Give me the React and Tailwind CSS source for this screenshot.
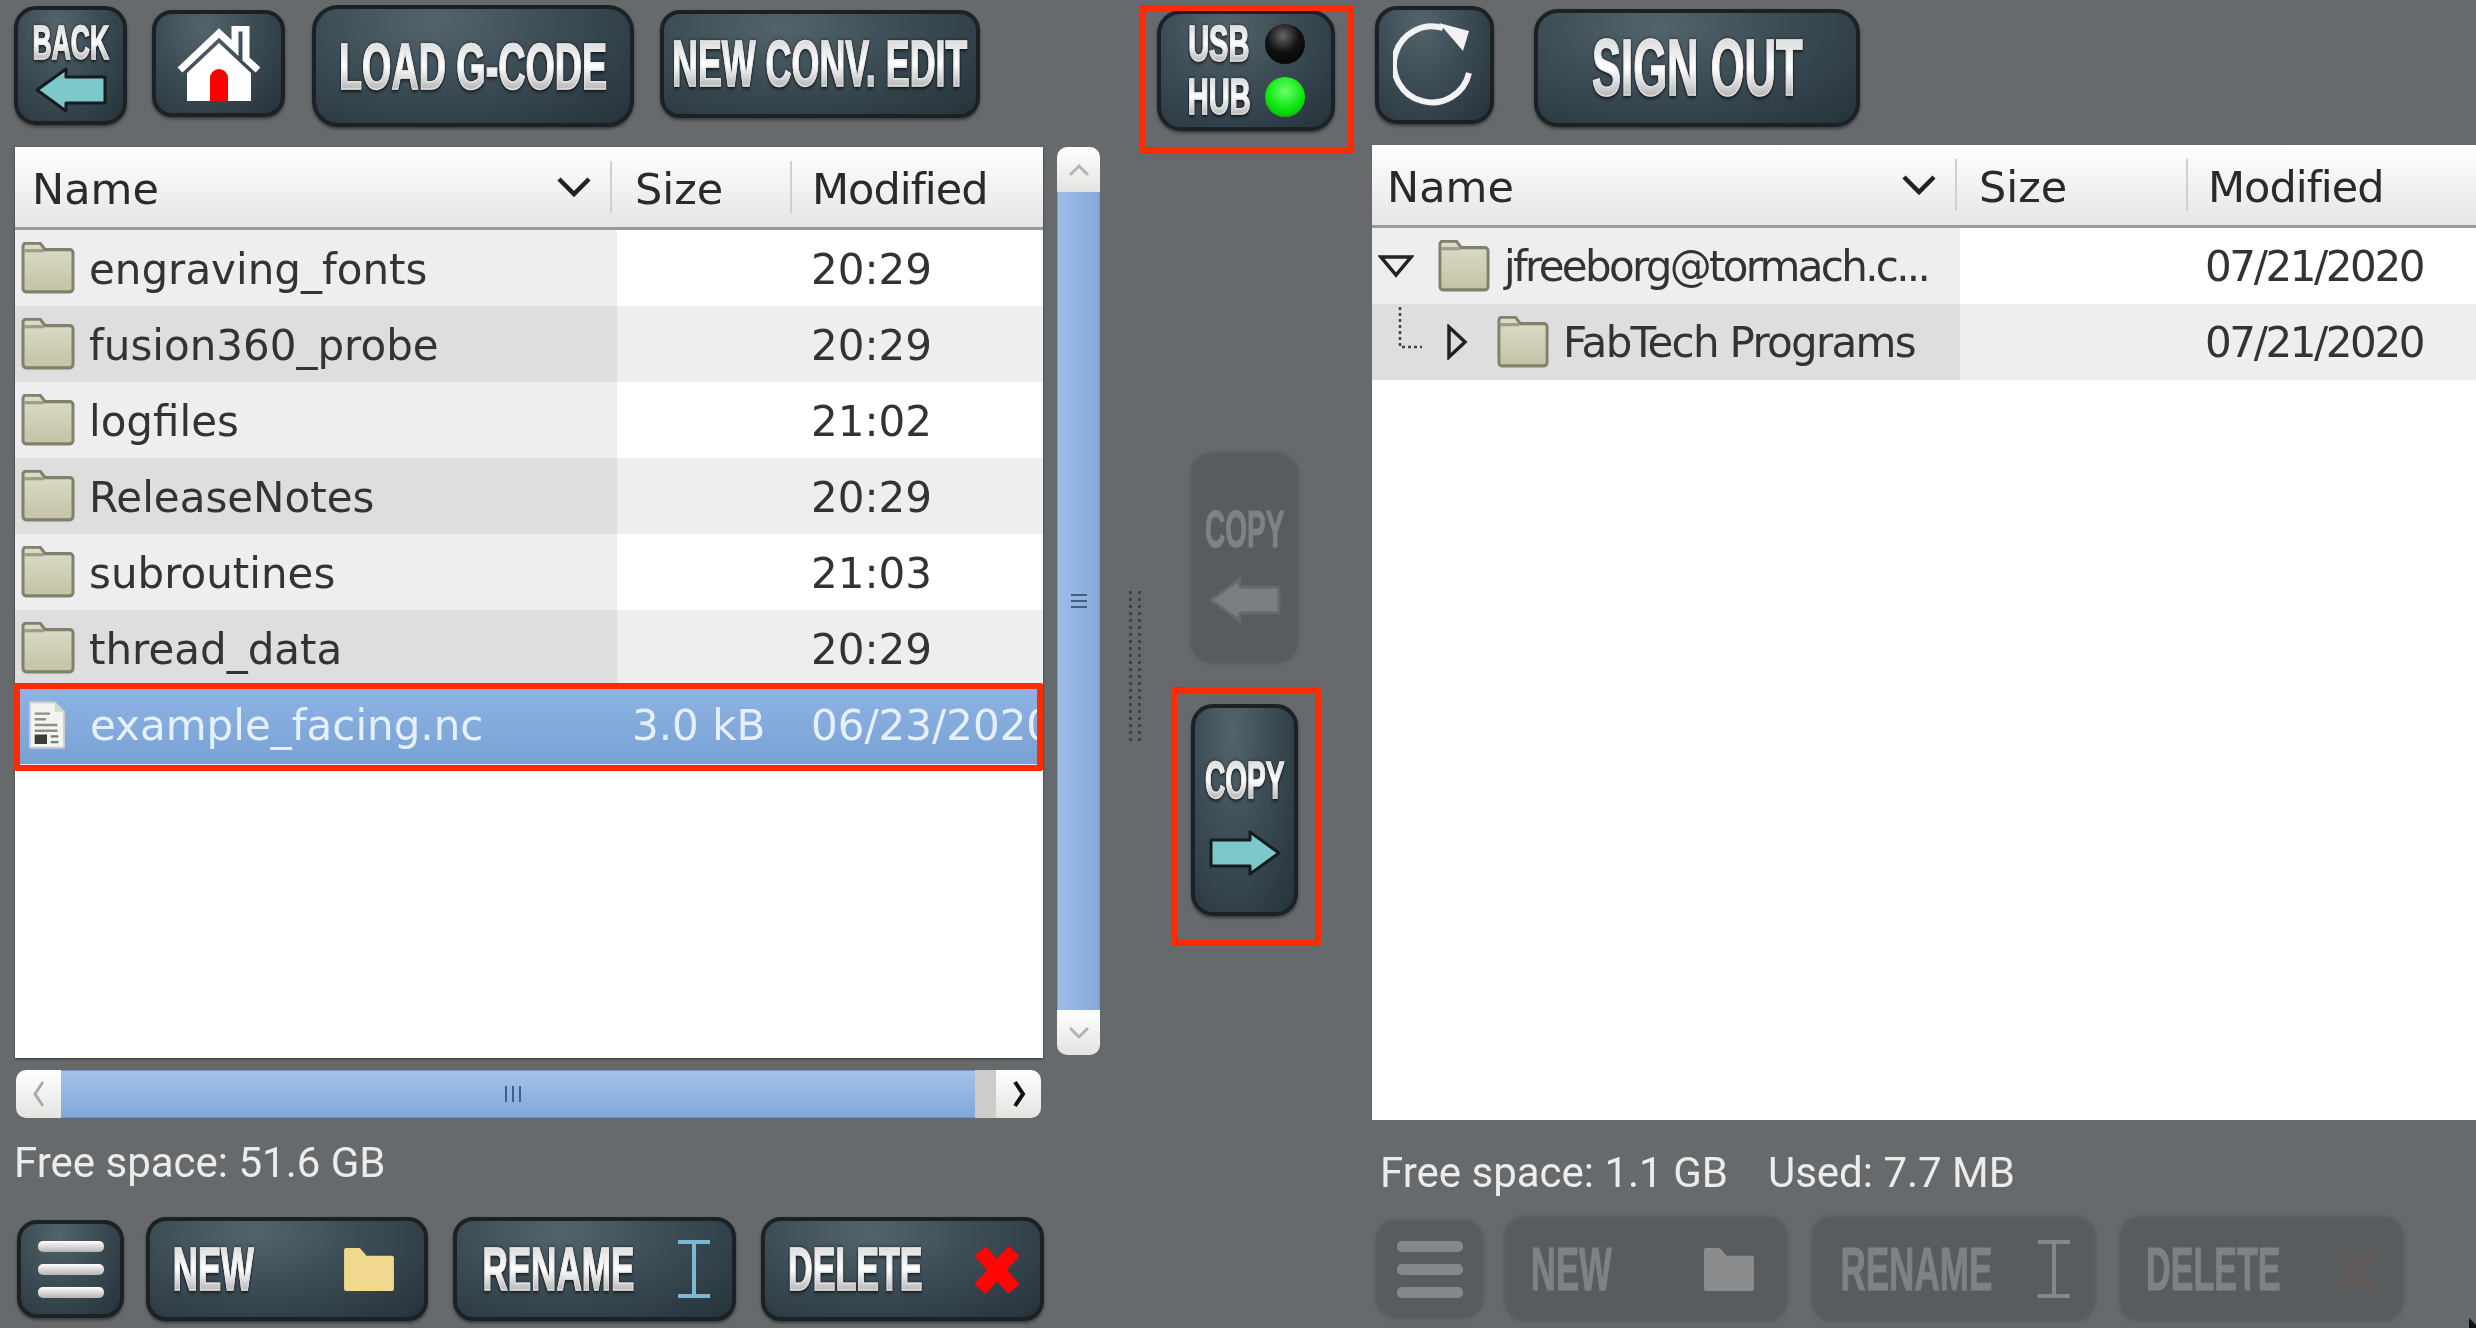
import React from "react";

const sans = "font-['DejaVu_Sans','Liberation_Sans',sans-serif]";
const BTN = "shrink-0 flex items-center rounded-[20px] border-[4px] border-[#1c2125] bg-[radial-gradient(ellipse_at_38%_12%,#54646d_0%,#3c4c55_45%,#2b3a42_85%,#263238_100%)] shadow-[0_2px_3px_rgba(30,30,30,.6)]";
const OFF = "shrink-0 flex items-center rounded-[20px] border-[3px] border-[#5a5d60] bg-[#595c5f] shadow-[0_0_4px_rgba(70,70,70,.5)]";

function Label({ text, box, scale, size, off }) {
  return (
    <span className={`flex justify-center shrink-0 ${box}`}>
      <span
        className={`shrink-0 inline-block whitespace-nowrap font-['Liberation_Sans',sans-serif] font-bold leading-none ${size} ${scale} ${
          off
            ? "text-[#7f8285] [-webkit-text-stroke:1px_#7f8285]"
            : "bg-gradient-to-b from-[#cfcfcf] via-white to-[#9a9a9a] bg-clip-text text-transparent [-webkit-text-stroke:1.5px_rgba(232,232,232,.75)] drop-shadow-[0_1px_2px_rgba(0,0,0,.9)]"
        }`}
      >
        {text}
      </span>
    </span>
  );
}

function Folder({ className }) {
  return (
    <svg viewBox="0 0 54 48" preserveAspectRatio="none" className={className}>
      <defs>
        <linearGradient id="fg" x1="0" y1="0" x2="0" y2="1">
          <stop offset="0" stopColor="#dcdcca" />
          <stop offset="1" stopColor="#c4c3a6" />
        </linearGradient>
      </defs>
      <path d="M2 4 a3 3 0 0 1 3-3 h14 l5 6 h25 a3 3 0 0 1 3 3 v33 a3 3 0 0 1-3 3 H5 a3 3 0 0 1-3-3z" fill="url(#fg)" stroke="#80806b" strokeWidth="3" />
      <path d="M3 8 h20" stroke="#9d9d88" strokeWidth="3" fill="none" />
    </svg>
  );
}

function FileIcon() {
  return (
    <svg viewBox="0 0 40 50" className="w-[38px] h-[48px] shrink-0 ml-[13px] mr-[24px]">
      <path d="M2 1 h26 l10 10 v38 H2z" fill="#f4f4ee" stroke="#c8ccd2" strokeWidth="2" />
      <path d="M28 1 v10 h10" fill="#d8d8d0" />
      <path d="M7 13 h16 M7 19 h12 M7 25 h24 M7 31 h24" stroke="#8d8d85" strokeWidth="2.5" />
      <rect x="7" y="35" width="13" height="10" fill="#3d3d38" />
      <path d="M24 37 h8 M24 43 h8" stroke="#77776f" strokeWidth="2.5" />
    </svg>
  );
}

function MenuIcon({ off }) {
  const bar = off
    ? "w-[66px] h-[11px] rounded-[5px] bg-[#85888a]"
    : "w-[66px] h-[11px] rounded-[5px] bg-gradient-to-b from-white to-[#b5b5b5]";
  return (
    <span className="flex flex-col gap-[12px]">
      <span className={bar} />
      <span className={bar} />
      <span className={bar} />
    </span>
  );
}

function NewFolderIcon({ off }) {
  return (
    <svg viewBox="0 0 52 44" className="w-[51px] h-[43px] shrink-0">
      <path d="M1 2 a2 2 0 0 1 2-2 h14 l7 8 h26 a2 2 0 0 1 2 2 v32 a2 2 0 0 1-2 2 H3 a2 2 0 0 1-2-2z" fill={off ? "#8a8c8e" : "#f0d98e"} />
    </svg>
  );
}

function BeamIcon({ off }) {
  const c = off ? "#85888a" : "#7fb6d2";
  return (
    <svg viewBox="0 0 34 58" className="w-[34px] h-[58px] shrink-0">
      <path d="M1 2 h32 M17 2 v54 M1 56 h32" stroke={c} strokeWidth="4" fill="none" />
    </svg>
  );
}

function XIcon({ off }) {
  return (
    <svg viewBox="0 0 46 48" className="w-[46px] h-[48px] shrink-0">
      <path d="M6 6 L40 44 M40 6 L6 44" stroke={off ? "#615c5c" : "#ff0505"} strokeWidth="15" strokeLinecap="butt" fill="none" />
    </svg>
  );
}

function Arrow({ dir, off }) {
  const fill = off ? "#7b7e80" : "#7cc9cb";
  const stroke = off ? "#66696b" : "#161b1e";
  return (
    <svg viewBox="0 0 74 46" className="w-[74px] h-[46px]">
      <path
        d={dir === "left" ? "M3 23 L32 2 V10 H71 V36 H32 V44z" : "M71 23 L42 2 V10 H3 V36 H42 V44z"}
        fill={fill}
        stroke={stroke}
        strokeWidth="3"
        strokeLinejoin="round"
      />
    </svg>
  );
}

function BottomBar({ off, className }) {
  const b = off ? OFF : BTN;
  return (
    <div className={`flex items-start ${className}`}>
      <div className={`${b} justify-center w-[107px] h-[98px] mt-[3px]`}>
        <MenuIcon off={off} />
      </div>
      <div className={`${b} justify-between w-[282px] h-[104px] ml-[22px] pl-[23px] pr-[30px]`}>
        <Label text="NEW" box="w-[81px]" scale="scale-x-[.56]" size="text-[62px]" off={off} />
        <NewFolderIcon off={off} />
      </div>
      <div className={`${b} justify-between w-[283px] h-[104px] ml-[25px] pl-[25px] pr-[21px]`}>
        <Label text="RENAME" box="w-[152px]" scale="scale-x-[.565]" size="text-[62px]" off={off} />
        <BeamIcon off={off} />
      </div>
      <div className={`${b} justify-between w-[283px] h-[104px] ml-[25px] pl-[23px] pr-[20px]`}>
        <Label text="DELETE" box="w-[134px]" scale="scale-x-[.55]" size="text-[62px]" off={off} />
        <XIcon off={off} />
      </div>
    </div>
  );
}

function Chevron() {
  return (
    <svg viewBox="0 0 36 22" className="w-[36px] h-[22px]">
      <path d="M3 3 L18 18 L33 3" stroke="#222" strokeWidth="4.5" fill="none" />
    </svg>
  );
}

function Header({ cols, h, namePad, sizePad }) {
  return (
    <div className={`flex shrink-0 ${h} items-center bg-gradient-to-b from-white to-[#e6e5e3] border-b-[3px] border-[#9b9b99] text-[43px] text-[#2a2a2a] ${sans}`}>
      <div className={`${cols[0]} flex items-center justify-between h-[52px] border-r-2 border-[#cfcfcd]`}>
        <span className={`${namePad} pt-[4px]`}>Name</span>
        <span className="pr-[18px]">
          <Chevron />
        </span>
      </div>
      <div className={`${cols[1]} flex items-center h-[52px] ${sizePad} pt-[4px] border-r-2 border-[#cfcfcd]`}>Size</div>
      <div className={`${cols[2]} flex items-center h-[52px] pl-[20px] pt-[4px] tracking-[-1px]`}>Modified</div>
    </div>
  );
}

const leftRows = [
  ["engraving_fonts", "20:29"],
  ["fusion360_probe", "20:29"],
  ["logfiles", "21:02"],
  ["ReleaseNotes", "20:29"],
  ["subroutines", "21:03"],
  ["thread_data", "20:29"],
];

function ScrollBtn({ className, children }) {
  return (
    <div className={`bg-gradient-to-b from-white to-[#e4e3e0] flex items-center justify-center shrink-0 ${className}`}>
      {children}
    </div>
  );
}

function LeftColumn() {
  return (
    <div className="w-[1110px] shrink-0 flex flex-col">
      <div className="h-[147px] flex items-start shrink-0 pl-[14px]">
        <div className={`${BTN} justify-center w-[113px] h-[119px] mt-[6px] flex-col rounded-[22px]`}>
          <Label text="BACK" box="w-[76px]" scale="scale-x-[.54]" size="text-[49px]" />
          <Arrow dir="left" />
        </div>
        <div className={`${BTN} justify-center w-[133px] h-[107px] mt-[10px] ml-[25px]`}>
          <svg viewBox="0 0 84 76" className="w-[84px] h-[76px]">
            <path d="M3 44 L42 7 L58 22 V2 H69 V33 L81 44" fill="none" stroke="#fff" strokeWidth="7" />
            <path d="M10 47 L42 17 L74 47 V75 H10z" fill="#fff" />
            <path d="M33 75 V52 a9 9 0 0 1 18 0 V75z" fill="#f00" />
          </svg>
        </div>
        <div className={`${BTN} justify-center w-[322px] h-[122px] mt-[5px] ml-[27px] rounded-[26px]`}>
          <Label text="LOAD G-CODE" box="w-[267px]" scale="scale-x-[.58]" size="text-[65px]" />
        </div>
        <div className={`${BTN} justify-center w-[320px] h-[108px] mt-[10px] ml-[26px]`}>
          <Label text="NEW CONV. EDIT" box="w-[298px]" scale="scale-x-[.56]" size="text-[64px]" />
        </div>
      </div>

      <div className="flex items-start ml-[15px] h-[911px] shrink-0">
        <div className="w-[1028px] h-[911px] bg-white flex flex-col shrink-0 shadow-[0_1px_2px_#333]">
          <Header cols={["w-[597px]", "w-[180px]", "flex-1"]} h="h-[83px]" namePad="pl-[17px]" sizePad="pl-[23px]" />
          {leftRows.map(([n, m], i) => (
            <div key={n} className={`flex h-[76px] shrink-0 items-center text-[#333] text-[42px] ${sans} ${i % 2 ? "bg-[#eeeeee]" : "bg-white"}`}>
              <div className={`w-[602px] h-full flex items-center ${i % 2 ? "bg-[#dedede]" : "bg-[#eeeef0]"}`}>
                <Folder className="w-[54px] h-[52px] ml-[6px] mr-[14px] shrink-0" />
                <span className="pt-[2px]">{n}</span>
              </div>
              <div className="w-[194px]" />
              <div className="pt-[2px]">{m}</div>
            </div>
          ))}
          <div className={`relative flex h-[80px] shrink-0 items-center text-[#e6f0fb] text-[42px] ${sans} bg-gradient-to-b from-[#8eb4e5] to-[#79a1d3] border-b-2 border-[#dce8f6]`}>
            <div className="w-[617px] flex items-center">
              <FileIcon />
              <span>example_facing.nc</span>
            </div>
            <div className="w-[179px]">3.0 kB</div>
            <div className="w-[227px] overflow-hidden whitespace-nowrap">06/23/2020</div>
            <div className="absolute -left-[1px] right-0 -top-[3px] bottom-[-7px] border-[6px] border-[#ff2a00] rounded-[2px]" />
          </div>
        </div>

        <div className="w-[43px] h-[908px] ml-[14px] flex flex-col shrink-0">
          <ScrollBtn className="h-[45px] rounded-t-[10px]">
            <svg viewBox="0 0 24 14" className="w-[24px] h-[14px]"><path d="M3 12 L12 3 L21 12" stroke="#b4b4b2" strokeWidth="3" fill="none" /></svg>
          </ScrollBtn>
          <div className="flex-1 bg-gradient-to-r from-[#9dbde8] to-[#86aad9] border-x border-[#7a9ecc] flex items-center justify-center">
            <span className="flex flex-col gap-[4px]">
              <span className="w-[16px] h-[2px] bg-[#3f5f86]" />
              <span className="w-[16px] h-[2px] bg-[#3f5f86]" />
              <span className="w-[16px] h-[2px] bg-[#3f5f86]" />
            </span>
          </div>
          <ScrollBtn className="h-[45px] rounded-b-[10px]">
            <svg viewBox="0 0 24 14" className="w-[24px] h-[14px]"><path d="M3 2 L12 11 L21 2" stroke="#b4b4b2" strokeWidth="3" fill="none" /></svg>
          </ScrollBtn>
        </div>
      </div>

      <div className="flex h-[48px] ml-[16px] w-[1025px] mt-[12px] shrink-0">
        <ScrollBtn className="w-[45px] rounded-l-[10px]">
          <svg viewBox="0 0 14 30" className="w-[14px] h-[30px]"><path d="M11 3 L3 15 L11 27" stroke="#aaa" strokeWidth="3" fill="none" /></svg>
        </ScrollBtn>
        <div className="w-[914px] bg-gradient-to-b from-[#a3c2ea] to-[#82a8d8] border-y border-[#6f95c4] flex items-center justify-center gap-[5px] pr-[10px]">
          <span className="w-[2px] h-[16px] bg-[#3f5f86]" />
          <span className="w-[2px] h-[16px] bg-[#3f5f86]" />
          <span className="w-[2px] h-[16px] bg-[#3f5f86]" />
        </div>
        <div className="w-[21px] bg-[#cccccb]" />
        <ScrollBtn className="w-[45px] rounded-r-[10px]">
          <svg viewBox="0 0 14 30" className="w-[14px] h-[30px]"><path d="M3 3 L11 15 L3 27" stroke="#111" strokeWidth="4" fill="none" /></svg>
        </ScrollBtn>
      </div>

      <div className="mt-[22px] ml-[14px] h-[45px] flex items-center text-[42px] text-[#ececec] font-['Roboto',sans-serif] whitespace-nowrap shrink-0">
        Free space: 51.6 GB
      </div>

      <BottomBar className="mt-[32px] ml-[17px]" />
    </div>
  );
}

function CenterColumn() {
  return (
    <div className="w-[262px] shrink-0 flex flex-col">
      <div className="relative ml-[47px] mt-[10px] w-[178px] h-[121px] shrink-0">
        <div className={`${BTN} justify-center w-full h-full flex-col gap-[3px] rounded-[24px]`}>
          {[["USB", "bg-[radial-gradient(circle_at_45%_30%,#666_0%,#111_45%,#000_100%)]"], ["HUB", "bg-[radial-gradient(circle_at_50%_35%,#6bff6b_0%,#0ee60e_55%,#0a9a0a_100%)]"]].map(([t, c]) => (
            <div key={t} className="flex items-center gap-[14px]">
              <Label text={t} box="w-[64px]" scale="scale-x-[.58]" size="text-[50px]" />
              <span className={`w-[40px] h-[40px] rounded-full ${c}`} />
            </div>
          ))}
        </div>
        <div className="absolute -left-[18px] -right-[19px] -top-[5px] -bottom-[22px] border-[6px] border-[#ff2a00] rounded-[2px]" />
      </div>

      <div className="flex items-start ml-[16px] mt-[322px]">
        <div className="w-[20px] h-[154px] mt-[136px] shrink-0 bg-[radial-gradient(circle,#3f4244_1.4px,transparent_1.9px)] bg-[length:9px_7px]" />
        <div className="flex flex-col ml-[45px]">
          <div className={`${OFF} justify-center w-[107px] h-[210px] flex-col gap-[22px] pt-[10px] rounded-[22px]`}>
            <Label text="COPY" box="w-[80px]" scale="scale-x-[.54]" size="text-[52px]" off />
            <Arrow dir="left" off />
          </div>
          <div className="relative mt-[41px] w-[107px] h-[212px]">
            <div className={`${BTN} justify-center w-full h-full flex-col gap-[24px] pt-[10px] rounded-[22px]`}>
              <Label text="COPY" box="w-[80px]" scale="scale-x-[.54]" size="text-[52px]" />
              <Arrow dir="right" />
            </div>
            <div className="absolute -left-[20px] -right-[23px] -top-[17px] -bottom-[30px] border-[6px] border-[#ff2a00] rounded-[2px]" />
          </div>
        </div>
      </div>
    </div>
  );
}

function RightColumn() {
  return (
    <div className="flex-1 flex flex-col min-w-0">
      <div className="h-[145px] flex items-start pl-[3px] shrink-0">
        <div className={`${BTN} justify-center w-[119px] h-[118px] mt-[6px] rounded-[22px]`}>
          <svg viewBox="0 0 84 84" className="w-[84px] h-[84px]">
            <path d="M50 5 A38 38 0 1 0 76 50" fill="none" stroke="#f2f2f2" strokeWidth="6" />
            <path d="M46 0 L76 8 L70 28z" fill="#f2f2f2" />
          </svg>
        </div>
        <div className={`${BTN} justify-center w-[326px] h-[118px] mt-[9px] ml-[40px] rounded-[24px]`}>
          <Label text="SIGN OUT" box="w-[211px]" scale="scale-x-[.545]" size="text-[80px]" />
        </div>
      </div>

      <div className="h-[975px] bg-white flex flex-col shrink-0">
        <Header cols={["w-[585px]", "w-[231px]", "flex-1"]} h="h-[83px]" namePad="pl-[15px]" sizePad="pl-[22px]" />
        <div className={`flex h-[76px] shrink-0 items-center text-[#333] text-[42px] ${sans} bg-white`}>
          <div className="w-[588px] h-full flex items-center bg-[#eeeeee] whitespace-nowrap">
            <svg viewBox="0 0 36 24" className="w-[36px] h-[24px] ml-[6px] mr-[24px] shrink-0"><path d="M3 3 H33 L18 21z" fill="none" stroke="#222" strokeWidth="3.5" /></svg>
            <Folder className="w-[52px] h-[52px] mr-[14px] shrink-0" />
            <span className="tracking-[-2.7px]">jfreeborg@tormach.c...</span>
          </div>
          <div className="w-[245px]" />
          <div className="tracking-[-2.4px]">07/21/2020</div>
        </div>
        <div className={`flex h-[76px] shrink-0 items-center text-[#333] text-[42px] ${sans} bg-[#eeeeee]`}>
          <div className="w-[588px] h-full flex items-center bg-[#dedede] whitespace-nowrap">
            <svg viewBox="0 0 26 56" className="w-[26px] h-[56px] ml-[26px] mr-[22px] mb-[14px] shrink-0"><path d="M2 0 V40 H24" fill="none" stroke="#444" strokeWidth="2.5" strokeDasharray="3 3" /></svg>
            <svg viewBox="0 0 22 36" className="w-[22px] h-[36px] mr-[29px] shrink-0"><path d="M3 3 V33 L19 18z" fill="none" stroke="#222" strokeWidth="3.5" /></svg>
            <Folder className="w-[52px] h-[52px] mr-[14px] shrink-0" />
            <span className="tracking-[-1.7px]">FabTech Programs</span>
          </div>
          <div className="w-[245px]" />
          <div className="tracking-[-2.4px]">07/21/2020</div>
        </div>
      </div>

      <div className="mt-[30px] ml-[8px] h-[45px] flex items-center gap-[40px] text-[42px] text-[#ececec] font-['Roboto',sans-serif] whitespace-nowrap shrink-0">
        <span>Free space: 1.1 GB</span>
        <span>Used: 7.7 MB</span>
      </div>

      <BottomBar off className="mt-[22px] ml-[4px]" />
    </div>
  );
}

export default function App() {
  return (
    <div className="relative w-[2476px] h-[1328px] overflow-hidden bg-[#666a6d] flex blur-[0.7px]">
      <LeftColumn />
      <CenterColumn />
      <RightColumn />
      <svg viewBox="0 0 8 10" className="absolute right-0 bottom-0 w-[8px] h-[10px]"><path d="M1 0 L8 7 V10 H1z" fill="#111" /></svg>
    </div>
  );
}
